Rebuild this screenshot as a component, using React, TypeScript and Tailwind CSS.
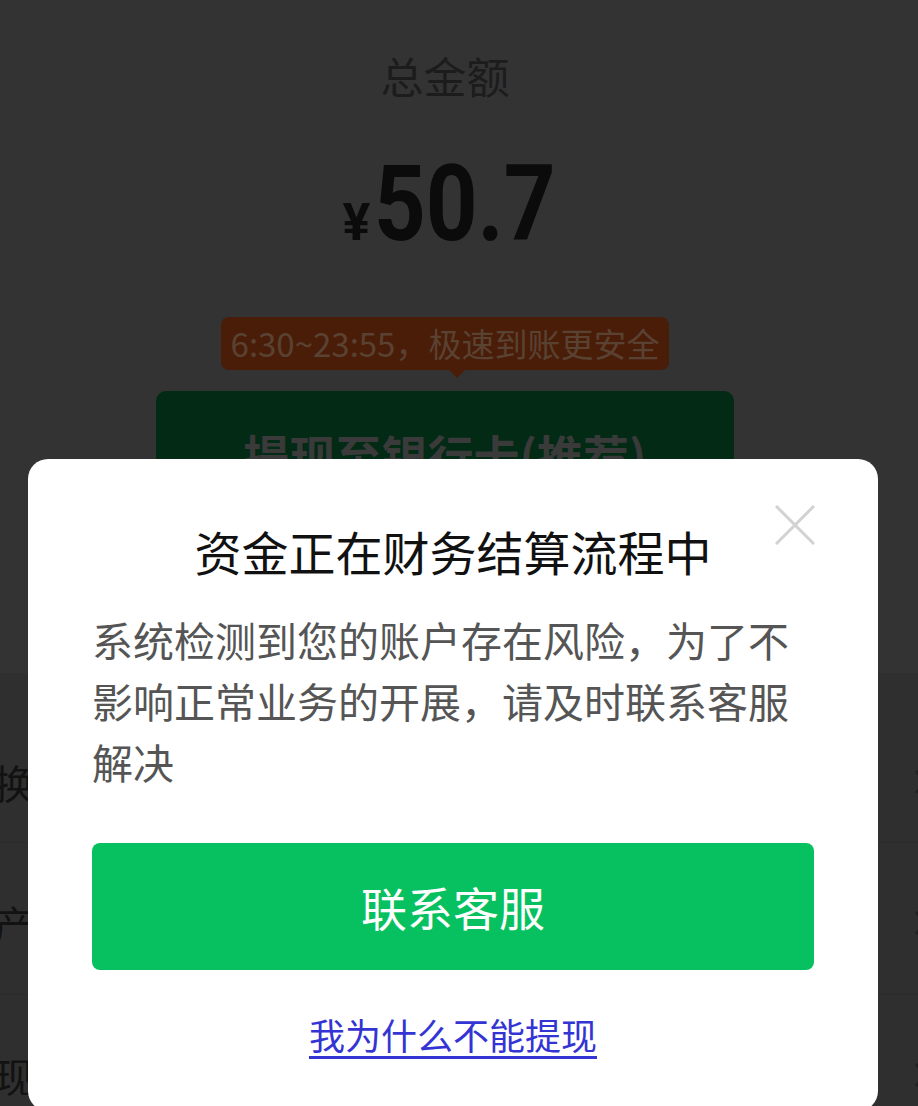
import React from "react";

const cjk = { fontFamily: '"Noto Sans CJK SC", "Noto Sans", sans-serif' };
const num = { fontFamily: 'Roboto, "Noto Sans CJK SC", sans-serif' };

function Chevron() {
  return (
    <svg width="14" height="26" viewBox="0 0 14 26" className="mr-[-10px]">
      <path d="M2 2 L12 13 L2 24" stroke="#222" strokeWidth="3" fill="none" />
    </svg>
  );
}

export default function App() {
  const rows = [
    { label: "兑换", h: "h-[170px]", pt: "pt-[48px]" },
    { label: "资产", h: "h-[152px]", pt: "pt-[8px]" },
    { label: "提现", h: "h-[160px]", pt: "pt-[0px]" },
  ];
  return (
    <div className="relative w-[918px] h-[1106px] overflow-hidden bg-[#333333]" style={cjk}>
      {/* underlying page (dimmed) */}
      <div className="flex flex-col items-center pr-[28px]">
        <div className="mt-[45px] h-[60px] leading-[60px] text-[43px] text-[#1c1c1c]">总金额</div>
        <div className="mt-[47px] flex items-baseline text-[#0b0b0b] leading-none" style={num}>
          <span className="text-[52px] font-bold mr-[4px]">¥</span>
          <span className="w-[173px] text-[105px] font-bold whitespace-nowrap">
            <span className="inline-block origin-left scale-x-[0.86]">50.7</span>
          </span>
        </div>
        <div className="mt-[60px] relative h-[53px] px-[10px] rounded-[8px] bg-[#4a1d09] flex items-center text-[33px] text-[#5a4232] whitespace-nowrap">
          6:30~23:55，极速到账更安全
          <div className="absolute left-[228px] top-[53px] w-0 h-0 border-l-[8px] border-r-[8px] border-t-[8px] border-l-transparent border-r-transparent border-t-[#4a1d09]" />
        </div>
        <div className="mt-[21px] w-[578px] h-[127px] rounded-[10px] bg-[#032a15] flex items-center justify-center text-[46px] font-bold text-[#3a3a3a]">
          提现至银行卡(推荐)
        </div>
      </div>
      <div className="mt-[155px] bg-[#2f2f2f] flex flex-col">
        {rows.map((r, i) => (
          <div
            key={i}
            className={`${r.h} ${r.pt} flex items-center justify-between border-b border-[#2b2b2b]`}
          >
            <span className="ml-[-46px] text-[40px] text-[#121212]">{r.label}</span>
            <Chevron />
          </div>
        ))}
      </div>

      {/* modal */}
      <div className="absolute left-[28px] top-[459px] w-[850px] h-[652px] bg-white rounded-[20px] px-[64px] pt-[60px]">
        <svg
          className="absolute left-[747px] top-[46px]"
          width="40"
          height="40"
          viewBox="0 0 40 40"
        >
          <path d="M1 1 L39 39 M39 1 L1 39" stroke="#d2d2d2" strokeWidth="3" fill="none" />
        </svg>
        <div className="h-[64px] leading-[64px] text-center text-[47px] text-[#111111]">资金正在财务结算流程中</div>
        <div className="mt-[26px] text-[41px] leading-[61px] text-[#555555]">
          系统检测到您的账户存在风险，为了不影响正常业务的开展，请及时联系客服解决
        </div>
        <div className="mt-[51px] h-[127px] rounded-[8px] bg-[#07c160] flex items-center justify-center text-[46px] text-white">
          联系客服
        </div>
        <div className="mt-[39px] text-center">
          <span className="text-[36px] leading-[50px] text-[#3434d4] underline underline-offset-[6px]">我为什么不能提现</span>
        </div>
      </div>
    </div>
  );
}
